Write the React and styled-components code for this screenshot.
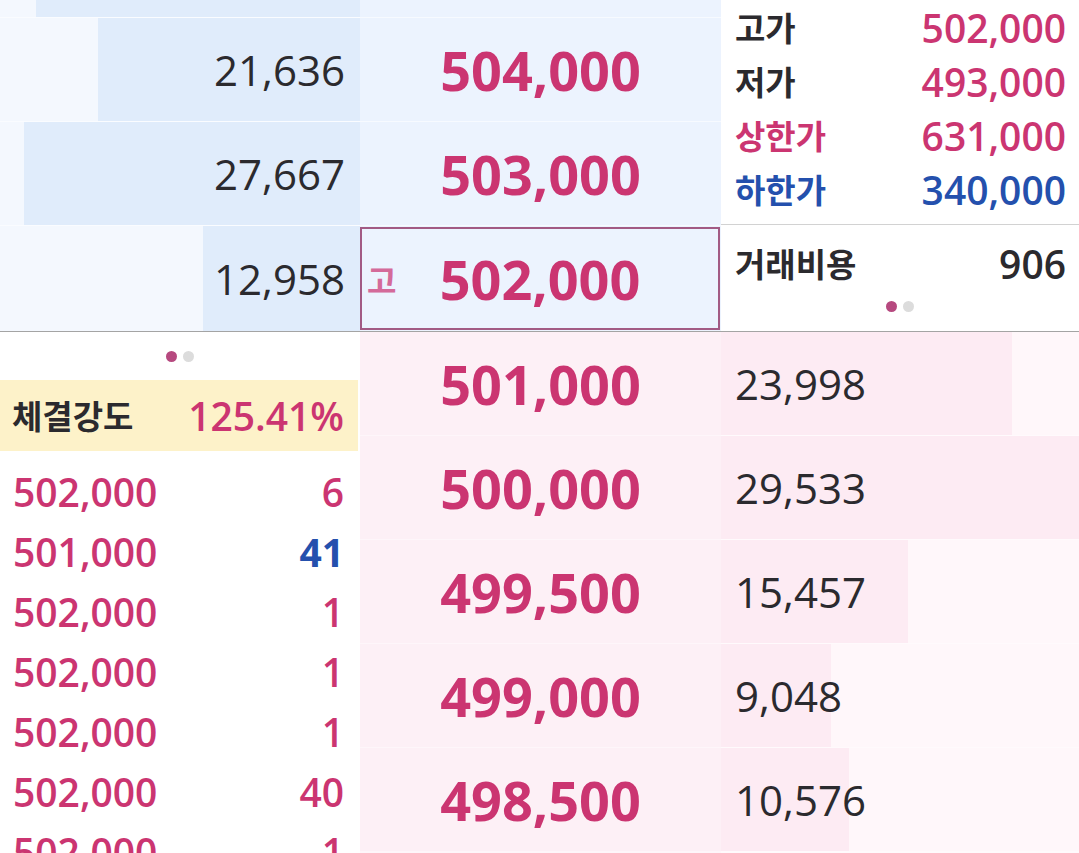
import React from 'react'
import styled, { createGlobalStyle } from 'styled-components'

const GlobalStyle = createGlobalStyle`
  html, body {
    margin: 0;
    padding: 0;
    background: #ffffff;
    overflow: hidden;
  }
  body {
    font-family: 'Noto Sans', 'Noto Sans CJK KR', sans-serif;
  }
`

const PINK = '#cb3571'
const BLUE = '#2450ad'
const DARK = '#2b2a2e'
const NUM_FONT = "'Open Sans', 'Noto Sans', sans-serif"
const BAR_SCALE = 0.01213

const Board = styled.div`
  width: 1079px;
  height: 853px;
  overflow: hidden;
  display: flex;
  flex-direction: column;
`
const Section = styled.div`
  display: grid;
  grid-template-columns: 360px 361px 358px;
  flex-shrink: 0;
`
const TopSection = styled(Section)`
  height: 331px;
  border-bottom: 1px solid #a4a4a4;
`
const BottomSection = styled(Section)`
  flex: 1;
  min-height: 0;
`

/* ---------- ask side (top) ---------- */
const Stack = styled.div`
  display: flex;
  flex-direction: column;
  gap: 1px;
  background: ${(p) => p.$line};
  overflow: hidden;
`
const AskCell = styled.div`
  height: ${(p) => p.$h}px;
  flex-shrink: 0;
  background: #f4f8fe;
  display: flex;
  justify-content: flex-end;
`
const AskBar = styled.div`
  height: 100%;
  background: #e0ecfb;
  display: flex;
  align-items: center;
  justify-content: flex-end;
  padding-right: 15px;
  box-sizing: border-box;
  font-family: ${NUM_FONT};
  font-size: 42px;
  line-height: 1;
  color: ${DARK};
  white-space: nowrap;
`
const PriceCell = styled.div`
  height: ${(p) => p.$h}px;
  flex-shrink: 0;
  background: ${(p) => p.$bg};
  display: flex;
  align-items: center;
  justify-content: center;
  box-sizing: border-box;
`
const Price = styled.span`
  font-family: ${NUM_FONT};
  font-size: 54px;
  font-weight: 700;
  line-height: 1;
  color: ${PINK};
`
const Current = styled.div`
  flex: 1;
  align-self: stretch;
  margin: 1px 1px 1px 0;
  border: 2px solid #a25a84;
  display: grid;
  grid-template-columns: 1fr auto 1fr;
  align-items: center;
`
const HighMark = styled.span`
  font-family: 'Noto Sans CJK KR', sans-serif;
  font-size: 32px;
  font-weight: 700;
  line-height: 1;
  color: #d46a9a;
  padding-left: 5px;
`

/* ---------- info panel (top right) ---------- */
const Info = styled.div`
  background: #ffffff;
  display: flex;
  flex-direction: column;
`
const Stats = styled.div`
  padding-bottom: 8px;
  border-bottom: 1px solid #d2d2d2;
`
const StatRow = styled.div`
  height: ${(p) => p.$h || 54}px;
  flex-shrink: 0;
  display: flex;
  align-items: center;
  justify-content: space-between;
  padding: 0 13px 0 14px;
`
const Label = styled.span`
  font-family: 'Noto Sans CJK KR', sans-serif;
  font-size: 33px;
  font-weight: 700;
  line-height: 1;
  color: ${(p) => p.$color || DARK};
`
const Value = styled.span`
  font-family: ${NUM_FONT};
  font-size: 39px;
  font-weight: ${(p) => p.$weight || 580};
  line-height: 1;
  color: ${(p) => p.$color || DARK};
`
const Dots = styled.div`
  height: ${(p) => p.$h}px;
  flex-shrink: 0;
  display: flex;
  align-items: center;
  justify-content: center;
  gap: 6px;
`
const Dot = styled.span`
  width: 11px;
  height: 11px;
  border-radius: 50%;
  background: ${(p) => (p.$on ? '#b6497f' : '#dcdcdc')};
`

/* ---------- trades (bottom left) ---------- */
const Trades = styled.div`
  display: flex;
  flex-direction: column;
  overflow: hidden;
`
const Strength = styled.div`
  height: 71px;
  flex-shrink: 0;
  margin-right: 2px;
  background: #fdf2c9;
  display: flex;
  align-items: center;
  justify-content: space-between;
  padding: 0 14px 0 12px;
`
const TradeList = styled.div`
  padding-top: 10px;
  flex-shrink: 0;
`
const TradeRow = styled.div`
  height: 60px;
  display: flex;
  align-items: center;
  justify-content: space-between;
  padding: 0 16px 0 13px;
`

/* ---------- bid side (bottom) ---------- */
const BidCell = styled.div`
  height: 103px;
  flex-shrink: 0;
  background: #fff7fa;
  display: flex;
`
const BidBar = styled.div`
  height: 100%;
  background: #fdebf3;
  display: flex;
  align-items: center;
  padding-left: 14px;
  box-sizing: border-box;
  font-family: ${NUM_FONT};
  font-size: 42px;
  line-height: 1;
  color: ${DARK};
  white-space: nowrap;
`

const asks = [
  { h: 17, vol: 26700, price: '' },
  { h: 103, vol: 21636, price: '504,000' },
  { h: 103, vol: 27667, price: '503,000' },
  { h: 105, vol: 12958, price: '502,000', current: true },
]

const bids = [
  { vol: 23998, price: '501,000' },
  { vol: 29533, price: '500,000' },
  { vol: 15457, price: '499,500' },
  { vol: 9048, price: '499,000' },
  { vol: 10576, price: '498,500' },
]

const trades = [
  { price: '502,000', qty: '6' },
  { price: '501,000', qty: '41', sell: true },
  { price: '502,000', qty: '1' },
  { price: '502,000', qty: '1' },
  { price: '502,000', qty: '1' },
  { price: '502,000', qty: '40' },
  { price: '502,000', qty: '1' },
]

const fmt = (n) => n.toLocaleString('en-US')

function Pager({ h }) {
  return (
    <Dots $h={h}>
      <Dot $on />
      <Dot />
    </Dots>
  )
}

export default function App() {
  return (
    <Board>
      <GlobalStyle />
      <TopSection>
        <Stack $line="#fafcff">
          {asks.map((a, i) => (
            <AskCell key={i} $h={a.h}>
              <AskBar style={{ width: Math.round(a.vol * BAR_SCALE) }}>
                {a.price ? fmt(a.vol) : ''}
              </AskBar>
            </AskCell>
          ))}
        </Stack>

        <Stack $line="#f7faff">
          {asks.map((a, i) => (
            <PriceCell key={i} $h={a.h} $bg="#ecf3fe">
              {a.current ? (
                <Current>
                  <HighMark>고</HighMark>
                  <Price>{a.price}</Price>
                  <span />
                </Current>
              ) : (
                <Price>{a.price}</Price>
              )}
            </PriceCell>
          ))}
        </Stack>

        <Info>
          <Stats>
            <StatRow>
              <Label>고가</Label>
              <Value $color={PINK}>502,000</Value>
            </StatRow>
            <StatRow>
              <Label>저가</Label>
              <Value $color={PINK}>493,000</Value>
            </StatRow>
            <StatRow>
              <Label $color={PINK}>상한가</Label>
              <Value $color={PINK}>631,000</Value>
            </StatRow>
            <StatRow>
              <Label $color={BLUE}>하한가</Label>
              <Value $color={BLUE}>340,000</Value>
            </StatRow>
          </Stats>
          <StatRow $h={76}>
            <Label>거래비용</Label>
            <Value>906</Value>
          </StatRow>
          <Pager h={10} />
        </Info>
      </TopSection>

      <BottomSection>
        <Trades>
          <Pager h={48} />
          <Strength>
            <Label>체결강도</Label>
            <Value $color={PINK}>125.41%</Value>
          </Strength>
          <TradeList>
            {trades.map((t, i) => (
              <TradeRow key={i}>
                <Value $color={PINK}>{t.price}</Value>
                <Value $color={t.sell ? BLUE : PINK} $weight={t.sell ? 700 : 580}>
                  {t.qty}
                </Value>
              </TradeRow>
            ))}
          </TradeList>
        </Trades>

        <Stack $line="#fef6fa">
          {bids.map((b, i) => (
            <PriceCell key={i} $h={103} $bg="#fdf0f6">
              <Price>{b.price}</Price>
            </PriceCell>
          ))}
        </Stack>

        <Stack $line="#fffafc">
          {bids.map((b, i) => (
            <BidCell key={i}>
              <BidBar style={{ width: Math.round(b.vol * BAR_SCALE) }}>
                {fmt(b.vol)}
              </BidBar>
            </BidCell>
          ))}
        </Stack>
      </BottomSection>
    </Board>
  )
}
